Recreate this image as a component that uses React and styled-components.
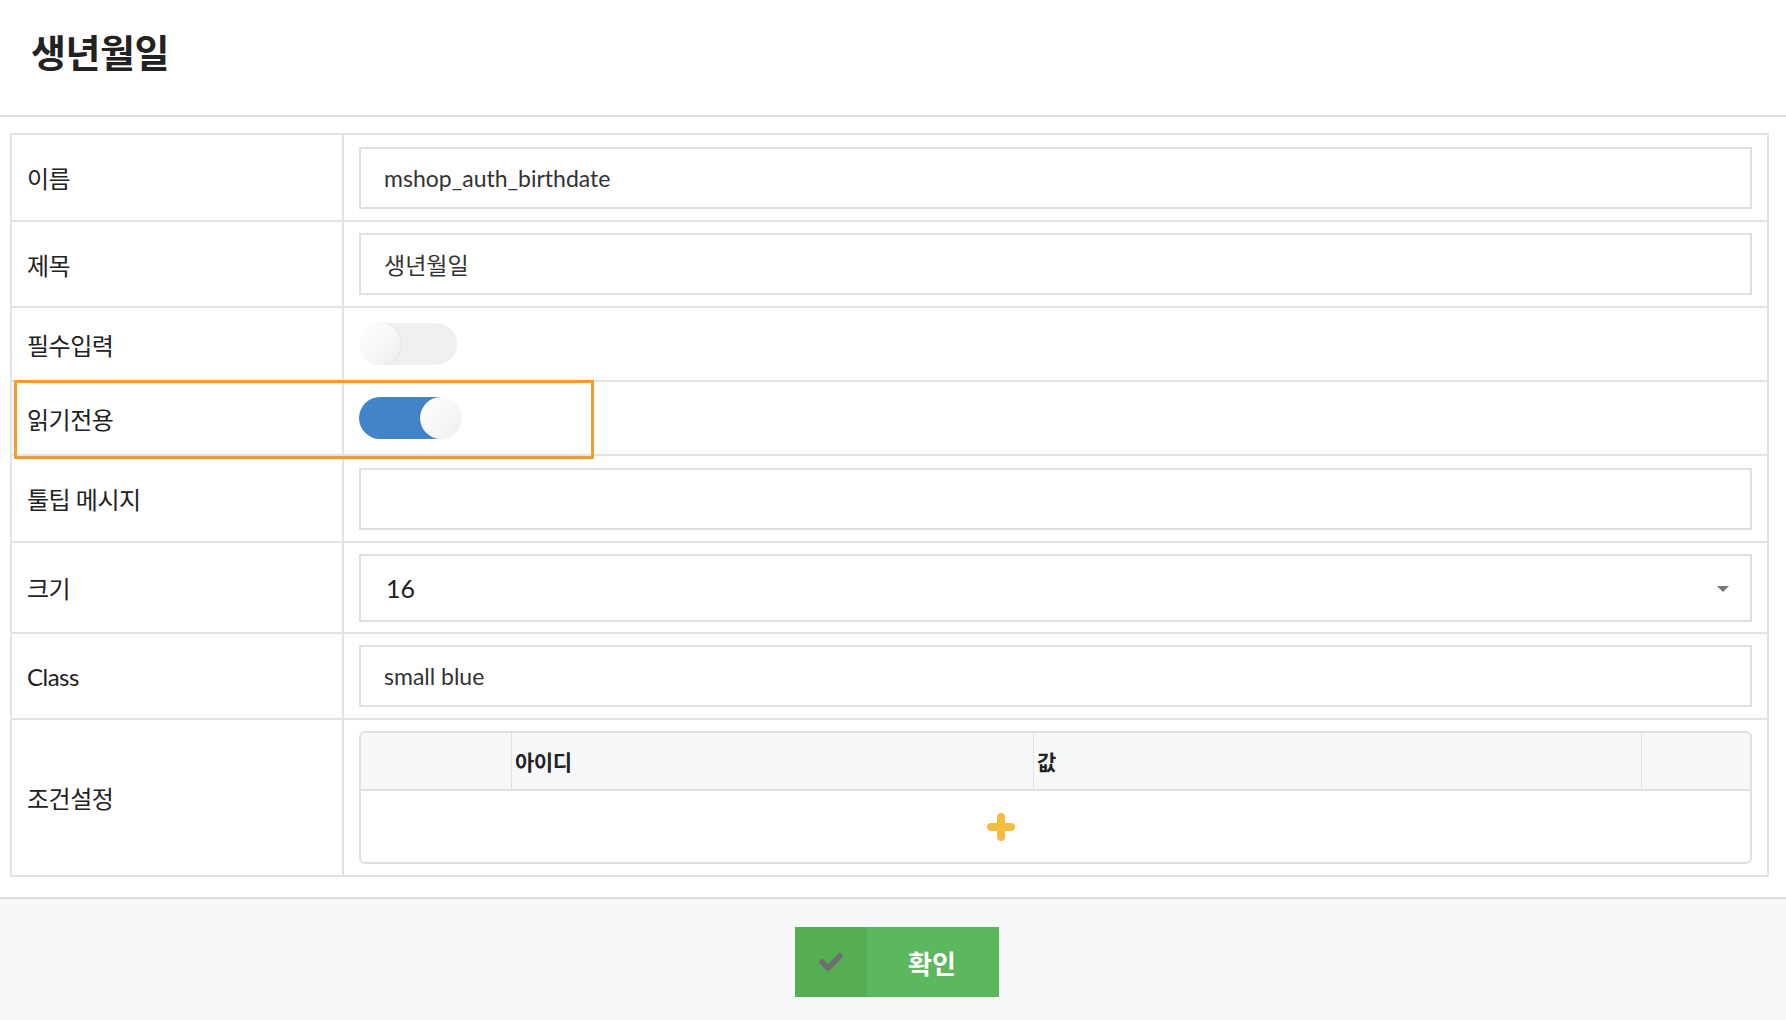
import React from 'react';
import styled, { createGlobalStyle } from 'styled-components';

const GlobalStyle = createGlobalStyle`
  html, body {
    margin: 0;
    padding: 0;
    background: #fff;
  }
  body {
    font-family: Lato, 'Noto Sans CJK KR', sans-serif;
    color: #222;
  }
  * {
    box-sizing: border-box;
  }
`;

const Page = styled.div`
  width: 1786px;
  height: 1020px;
  display: flex;
  flex-direction: column;
  overflow: hidden;
  background: #fff;
`;

const Header = styled.div`
  height: 117px;
  flex-shrink: 0;
  display: flex;
  align-items: center;
  padding: 0 0 12px 31px;
  border-bottom: 2px solid #dedede;
`;

const Title = styled.h1`
  margin: 0;
  font-size: 38px;
  line-height: 1;
  font-weight: 700;
  letter-spacing: -0.5px;
  color: #222;
`;

const Body = styled.div`
  padding: 16px 17px 0 10px;
  flex-shrink: 0;
`;

const Table = styled.div`
  border: 2px solid #e3e3e3;
`;

const Row = styled.div`
  position: relative;
  display: grid;
  grid-template-columns: 332px 1fr;
  height: ${p => p.$h}px;
  & + & {
    border-top: 2px solid #e3e3e3;
  }
`;

const Label = styled.div`
  display: flex;
  align-items: center;
  padding-left: 15px;
  border-right: 2px solid #e3e3e3;
  font-size: 24px;
  letter-spacing: -0.5px;
  color: #222;
`;

const Cell = styled.div`
  display: flex;
  align-items: center;
  padding: 0 15px;
`;

const Input = styled.input`
  width: 100%;
  height: 62px;
  border: 2px solid #e0e0e0;
  outline: none;
  padding: 0 23px;
  font-family: Lato, 'Noto Sans CJK KR', sans-serif;
  font-size: 23px;
  color: #333;
  background: #fff;
`;

const SelectBox = styled.div`
  width: 100%;
  height: 68px;
  border: 2px solid #e0e0e0;
  display: flex;
  align-items: center;
  justify-content: space-between;
  padding: 0 21px 0 25px;
  font-size: 25px;
  color: #222;
`;

const Caret = styled.span`
  width: 0;
  height: 0;
  border-left: 6px solid transparent;
  border-right: 6px solid transparent;
  border-top: 6px solid #777;
  margin-top: 2px;
`;

const Track = styled.div`
  position: relative;
  width: 98px;
  height: 42px;
  border-radius: 21px;
  background: ${p => (p.$on ? '#4284c9' : '#f0f0f0')};
`;

const Knob = styled.div`
  position: absolute;
  top: 0;
  left: ${p => (p.$on ? '61px' : '0')};
  width: 42px;
  height: 42px;
  border-radius: 50%;
  background: linear-gradient(135deg, #ffffff 0%, #f6f6f6 60%, #ececec 100%);
  box-shadow: ${p => (p.$on ? '-1px 0 2px rgba(0,0,0,0.08)' : '1px 0 2px rgba(0,0,0,0.06)')};
`;

const Highlight = styled.div`
  position: absolute;
  top: -2px;
  left: 2px;
  width: 580px;
  height: 79px;
  border: 3px solid #f29b34;
  z-index: 2;
  pointer-events: none;
`;

const CondTable = styled.div`
  width: 100%;
  border: 2px solid #e0e0e0;
  border-radius: 6px;
  overflow: hidden;
`;

const CondGrid = styled.div`
  display: grid;
  grid-template-columns: 150px 522px 608px 1fr;
`;

const CondHead = styled(CondGrid)`
  height: 58px;
  background: #f7f8fa;
  border-bottom: 2px solid #e0e0e0;
`;

const HeadCell = styled.div`
  display: flex;
  align-items: center;
  padding-left: 3px;
  font-size: 21px;
  font-weight: 700;
  color: #222;
  letter-spacing: -0.5px;
  & + & {
    border-left: 1px solid #e3e3e3;
  }
`;

const CondBody = styled(CondGrid)`
  height: 71px;
`;

const AddCell = styled.div`
  grid-column: 1 / 4;
  display: flex;
  align-items: center;
  justify-content: center;
`;

const Footer = styled.div`
  margin-top: 20px;
  flex: 1;
  border-top: 2px solid #dcdcdc;
  background: #f7f8fa;
  display: flex;
  justify-content: center;
  padding: 28px 0 0 8px;
`;

const Button = styled.button`
  display: flex;
  width: 204px;
  height: 70px;
  padding: 0;
  border: none;
  background: #5cb85c;
  cursor: pointer;
`;

const ButtonIcon = styled.span`
  width: 72px;
  height: 100%;
  display: flex;
  align-items: center;
  justify-content: center;
  background: #55ae52;
`;

const ButtonText = styled.span`
  flex: 1;
  display: flex;
  align-items: center;
  justify-content: center;
  color: #fff;
  font-family: Lato, 'Noto Sans CJK KR', sans-serif;
  font-size: 26px;
  font-weight: 700;
  padding-right: 2px;
`;

function Toggle({ on }) {
  return (
    <Track $on={on}>
      <Knob $on={on} />
    </Track>
  );
}

const rows = [
  { label: '이름', h: 85, type: 'input', value: 'mshop_auth_birthdate' },
  { label: '제목', h: 86, type: 'input', value: '생년월일' },
  { label: '필수입력', h: 74, type: 'toggle', on: false },
  { label: '읽기전용', h: 74, type: 'toggle', on: true, highlight: true },
  { label: '툴팁 메시지', h: 87, type: 'input', value: '' },
  { label: '크기', h: 91, type: 'select', value: '16' },
  { label: 'Class', h: 86, type: 'input', value: 'small blue' },
  { label: '조건설정', h: 157, type: 'cond' },
];

function Field({ row }) {
  if (row.type === 'input') return <Input readOnly defaultValue={row.value} />;
  if (row.type === 'toggle') return <Toggle on={row.on} />;
  if (row.type === 'select')
    return (
      <SelectBox>
        <span>{row.value}</span>
        <Caret />
      </SelectBox>
    );
  return (
    <CondTable>
      <CondHead>
        <HeadCell />
        <HeadCell>아이디</HeadCell>
        <HeadCell>값</HeadCell>
        <HeadCell />
      </CondHead>
      <CondBody>
        <AddCell>
          <svg width="28" height="28" viewBox="0 0 28 28">
            <path d="M14 4v20M4 14h20" stroke="#f4bd41" strokeWidth="8" strokeLinecap="round" />
          </svg>
        </AddCell>
      </CondBody>
    </CondTable>
  );
}

export default function App() {
  return (
    <>
      <GlobalStyle />
      <Page>
        <Header>
          <Title>생년월일</Title>
        </Header>
        <Body>
          <Table>
            {rows.map((row, i) => (
              <Row key={i} $h={row.h}>
                <Label>{row.label}</Label>
                <Cell>
                  <Field row={row} />
                </Cell>
                {row.highlight && <Highlight />}
              </Row>
            ))}
          </Table>
        </Body>
        <Footer>
          <Button>
            <ButtonIcon>
              <svg width="26" height="22" viewBox="0 0 26 22">
                <path d="M4 11l6 6L22 5" fill="none" stroke="#6e6e6e" strokeWidth="5.5" strokeLinecap="round" strokeLinejoin="round" />
              </svg>
            </ButtonIcon>
            <ButtonText>확인</ButtonText>
          </Button>
        </Footer>
      </Page>
    </>
  );
}
